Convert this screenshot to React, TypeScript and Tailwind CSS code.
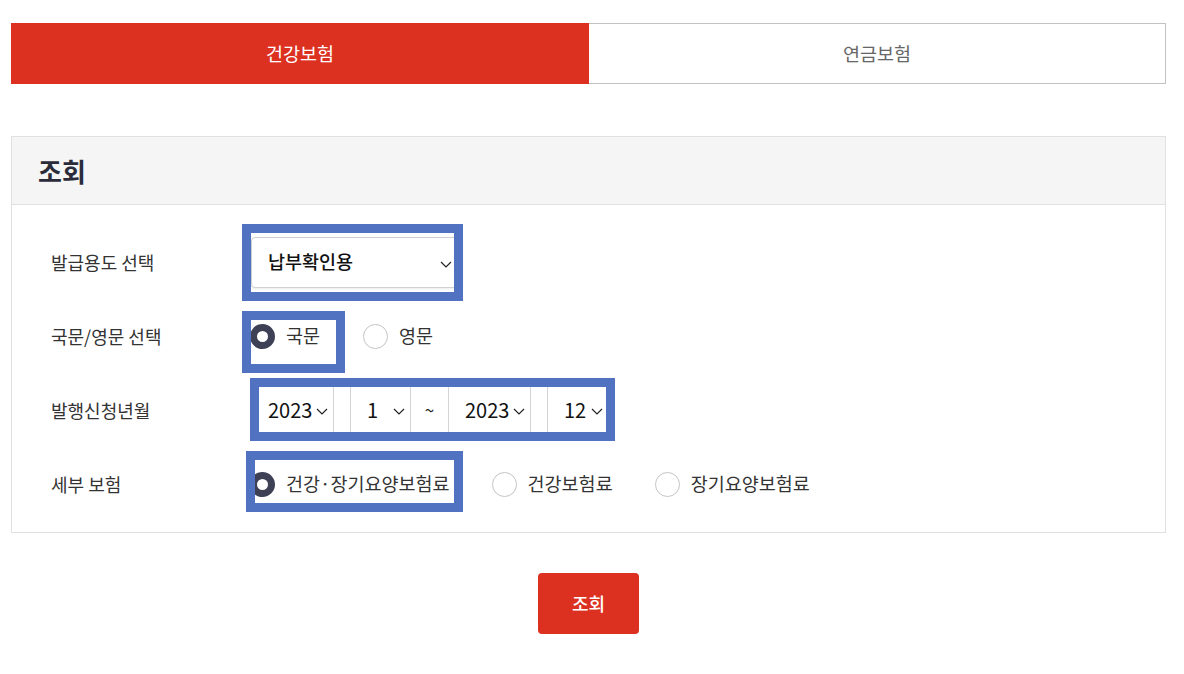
import React from "react";

const font = { fontFamily: '"Noto Sans CJK KR", "Noto Sans", sans-serif' };

function Chevron({ className = "" }: { className?: string }) {
  return (
    <svg className={className} width="12" height="7" viewBox="0 0 12 7" fill="none">
      <path d="M1 1l5 5 5-5" stroke="#222" strokeWidth="1.2" />
    </svg>
  );
}

function DateSelect({ value, w }: { value: string; w: string }) {
  return (
    <div className={`relative h-[51px] ${w} border border-[#d4d4d4] rounded-[3px] bg-white flex items-center pl-[16px] text-[20px] text-[#111]`}>
      <span>{value}</span>
      <Chevron className="absolute right-[5px] top-[22px]" />
    </div>
  );
}

function Radio({ checked, label }: { checked?: boolean; label: string }) {
  return (
    <div className="flex items-center gap-[11px]">
      {checked ? (
        <span className="w-[25px] h-[25px] rounded-full border-[7px] border-[#3e4056] bg-white box-border" />
      ) : (
        <span className="w-[25px] h-[25px] rounded-full border border-[#c4c4c8] bg-white box-border" />
      )}
      <span className="text-[18.5px] text-[#333]">{label}</span>
    </div>
  );
}

export default function App() {
  return (
    <div style={font} className="w-[1184px] h-[674px] bg-white pl-[11px] pr-[18px] pt-[23px] overflow-hidden">
      {/* Tabs */}
      <div className="flex h-[61px]">
        <div className="w-[578px] bg-[#dc3121] flex items-center justify-center text-white text-[18.5px]">
          건강보험
        </div>
        <div className="flex-1 border border-l-0 border-[#c2c2c2] flex items-center justify-center text-[#666] text-[18.5px]">
          연금보험
        </div>
      </div>

      {/* Panel */}
      <div className="mt-[52px] border border-[#e0e0e0]">
        <div className="h-[68px] bg-[#f5f5f5] border-b border-[#e0e0e0] flex items-center pl-[26px]">
          <span className="text-[26px] font-bold text-[#2a2c3a]">조회</span>
        </div>
        <div className="pt-[20px] pb-[11px]">
          {/* Row 1 */}
          <div className="relative h-[74px] flex items-center pl-[39px]">
            <div className="w-[200px] text-[18px] text-[#333]">발급용도 선택</div>
            <div className="relative w-[212px] h-[51px] border border-[#d0d0d0] rounded-[4px] shadow-[0_1px_2px_rgba(0,0,0,0.08)] bg-white flex items-center pl-[16px] text-[18.5px] font-medium text-[#111]">
              납부확인용
              <Chevron className="absolute right-[10px] top-[23px]" />
            </div>
            <div className="absolute left-[230px] top-[-1px] w-[221px] h-[77px] border-[9px] border-[#5072c0]" />
          </div>

          {/* Row 2 */}
          <div className="relative h-[74px] flex items-center pl-[39px]">
            <div className="w-[199px] text-[18px] text-[#333]">국문/영문 선택</div>
            <div className="flex items-center gap-[43px]">
              <Radio checked label="국문" />
              <Radio label="영문" />
            </div>
            <div className="absolute left-[230px] top-[12px] w-[103px] h-[62px] border-[9px] border-[#5072c0]" />
          </div>

          {/* Row 3 */}
          <div className="relative h-[74px] flex items-center pl-[39px]">
            <div className="w-[200px] text-[18px] text-[#333]">발행신청년월</div>
            <div className="flex items-center">
              <DateSelect value="2023" w="w-[83px]" />
              <div className="w-[16px]" />
              <DateSelect value="1" w="w-[61px]" />
              <div className="w-[37px] text-center text-[17px] text-[#222]">~</div>
              <DateSelect value="2023" w="w-[83px]" />
              <div className="w-[16px]" />
              <DateSelect value="12" w="w-[62px]" />
            </div>
            <div className="absolute left-[238px] top-[5px] w-[365px] h-[63px] border-[9px] border-[#5072c0]" />
          </div>

          {/* Row 4 */}
          <div className="relative h-[74px] flex items-center pl-[39px]">
            <div className="w-[199px] text-[18px] text-[#333]">세부 보험</div>
            <div className="flex items-center gap-[42px]">
              <Radio checked label="건강·장기요양보험료" />
              <Radio label="건강보험료" />
              <Radio label="장기요양보험료" />
            </div>
            <div className="absolute left-[234px] top-[4px] w-[217px] h-[61px] border-[9px] border-[#5072c0]" />
          </div>
        </div>
      </div>

      {/* Button */}
      <div className="flex justify-center mt-[40px]">
        <button className="w-[101px] h-[61px] rounded-[4px] bg-[#dc3121] text-white text-[18px] font-medium">
          조회
        </button>
      </div>
    </div>
  );
}
